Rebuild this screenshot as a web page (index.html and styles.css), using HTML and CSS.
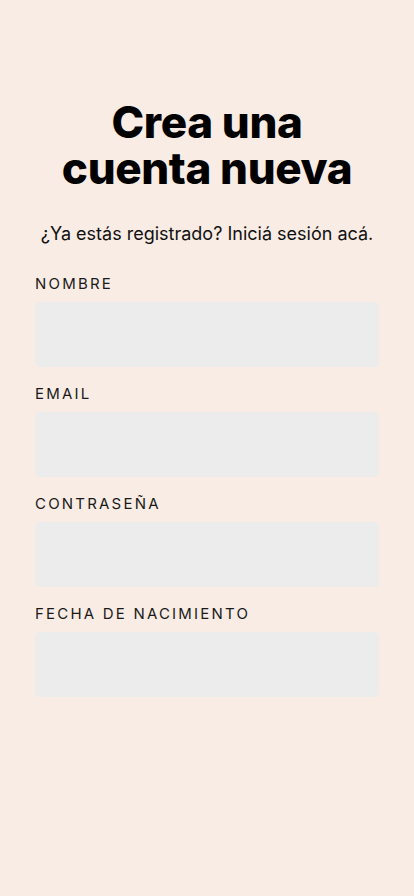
FILE: index.html
```html
<!DOCTYPE html>
<html lang="es">
<head>
<meta charset="utf-8">
<meta name="viewport" content="width=device-width, initial-scale=1">
<title>Crea una cuenta nueva</title>
<link rel="stylesheet" href="styles.css">
</head>
<body>
<main class="page">
  <h1 class="title">Crea una<br>cuenta nueva</h1>
  <p class="subtitle">¿Ya estás registrado? Iniciá sesión acá.</p>
  <form class="form">
    <label class="field">
      <span class="label">Nombre</span>
      <input class="input" type="text">
    </label>
    <label class="field">
      <span class="label">Email</span>
      <input class="input" type="email">
    </label>
    <label class="field">
      <span class="label">Contraseña</span>
      <input class="input" type="password">
    </label>
    <label class="field">
      <span class="label">Fecha de nacimiento</span>
      <input class="input" type="text">
    </label>
  </form>
</main>
</body>
</html>
```

FILE: styles.css
```css
html, body {
  margin: 0;
  padding: 0;
  background: #f9ece4;
  min-height: 100%;
}
body {
  font-family: "Inter", "Noto Sans", sans-serif;
  color: #111;
}
.page {
  padding: 99px 35px 0;
  display: flex;
  flex-direction: column;
}
.title {
  margin: 0;
  text-align: center;
  font-family: "Inter", sans-serif;
  font-weight: 800;
  font-size: 44px;
  line-height: 46px;
  letter-spacing: -0.4px;
  color: #000;
}
.subtitle {
  margin: 31px 0 0;
  text-align: center;
  font-size: 18px;
  line-height: 24px;
  color: #111;
}
.form {
  margin-top: 28px;
  display: flex;
  flex-direction: column;
  gap: 17px;
}
.field {
  display: flex;
  flex-direction: column;
  gap: 8px;
}
.label {
  text-transform: uppercase;
  font-size: 15px;
  line-height: 20px;
  letter-spacing: 2.2px;
  color: #1a1a1a;
}
.input {
  display: block;
  box-sizing: border-box;
  width: 100%;
  height: 65px;
  border: none;
  border-radius: 5px;
  background: #ececec;
  padding: 0 14px;
  font: inherit;
  outline: none;
}
```
